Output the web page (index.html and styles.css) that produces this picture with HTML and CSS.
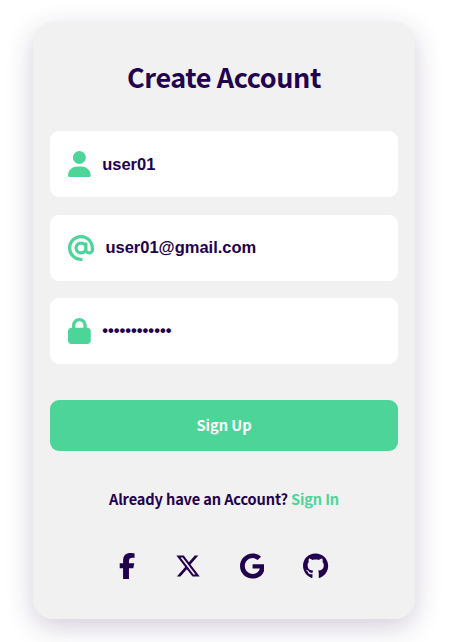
FILE: index.html
```html
<!DOCTYPE html>
<html lang="en">
<head>
    <meta charset="UTF-8">
    <meta name="viewport" content="width=device-width, initial-scale=1.0">
    <title>Create Account</title>
    <link rel="stylesheet" href="styles.css">
</head>
<body>
    <form class="card">
        <h1 class="title">Create Account</h1>

        <div class="inputs">
            <label class="field">
                <svg class="icon" viewBox="0 0 448 512"><path d="M224 256A128 128 0 1 0 224 0a128 128 0 1 0 0 256zm-45.700 48C79.800 304 0 383.800 0 482.300C0 498.700 13.300 512 29.700 512H418.300c16.400 0 29.700-13.300 29.700-29.700C448 383.800 368.200 304 269.700 304H178.300z"/></svg>
                <input type="text" value="user01" aria-label="Username">
            </label>
            <label class="field">
                <svg class="icon" viewBox="0 0 512 512"><path d="M256 64C150 64 64 150 64 256s86 192 192 192c17.700 0 32 14.300 32 32s-14.300 32-32 32C114.600 512 0 397.400 0 256S114.600 0 256 0S512 114.600 512 256v32c0 53-43 96-96 96c-29.300 0-55.600-13.200-73.200-33.900C320 371.100 289.500 384 256 384c-70.700 0-128-57.300-128-128s57.300-128 128-128c27.900 0 53.700 8.900 74.700 24.100c5.700-5 13.100-8.100 21.300-8.100c17.700 0 32 14.300 32 32v112c0 17.700 14.300 32 32 32s32-14.300 32-32V256c0-106-86-192-192-192zm64 192a64 64 0 1 0 -128 0 64 64 0 1 0 128 0z"/></svg>
                <input type="text" value="user01@gmail.com" aria-label="Email">
            </label>
            <label class="field">
                <svg class="icon" viewBox="0 0 448 512"><path d="M144 144v48H304V144c0-44.200-35.800-80-80-80s-80 35.800-80 80zM80 192V144C80 64.500 144.500 0 224 0s144 64.500 144 144v48h16c35.300 0 64 28.700 64 64V448c0 35.300-28.700 64-64 64H64c-35.300 0-64-28.700-64-64V256c0-35.300 28.700-64 64-64H80z"/></svg>
                <input type="password" value="password1234" aria-label="Password">
            </label>
        </div>

        <button type="button" class="btn">Sign Up</button>

        <p class="signin">Already have an Account? <a href="#">Sign In</a></p>

        <div class="social">
            <a href="#" aria-label="Facebook"><svg class="icon" viewBox="0 0 320 512"><path d="M80 299.300V512H196V299.300h86.500l18-97.800H196V166.900c0-51.700 20.300-71.500 72.700-71.500c16.300 0 29.400 .4 37 1.200V7.900C291.400 4 256.400 0 236.200 0C129.300 0 80 50.500 80 159.400v42.100H14v97.800H80z"/></svg></a>
            <a href="#" aria-label="X"><svg class="icon" viewBox="0 0 512 512"><path d="M389.200 48h70.600L305.600 224.200 487 464H345L233.700 318.600 106.500 464H35.800L200.700 275.500 26.800 48H172.400L272.900 180.900 389.200 48zM364.400 421.800h39.100L151.100 88h-42L364.400 421.800z"/></svg></a>
            <a href="#" aria-label="Google"><svg class="icon" viewBox="0 0 488 512"><path d="M488 261.800C488 403.300 391.100 504 248 504 110.800 504 0 393.200 0 256S110.800 8 248 8c66.800 0 123 24.500 166.300 64.900l-67.500 64.900C258.500 52.600 94.300 116.600 94.300 256c0 86.500 69.100 156.600 153.700 156.600 98.200 0 135-70.400 140.800-106.900H248v-85.300h236.100c2.300 12.700 3.900 24.900 3.900 41.400z"/></svg></a>
            <a href="#" aria-label="GitHub"><svg class="icon" viewBox="0 0 496 512"><path d="M165.900 397.400c0 2-2.300 3.600-5.200 3.600-3.300.3-5.600-1.300-5.600-3.600 0-2 2.300-3.600 5.200-3.600 3-.3 5.600 1.300 5.600 3.600zm-31.100-4.500c-.7 2 1.300 4.300 4.300 4.900 2.600 1 5.600 0 6.200-2s-1.300-4.300-4.300-5.200c-2.600-.7-5.500.3-6.200 2.300zm44.200-1.700c-2.900.7-4.900 2.600-4.600 4.900.3 2 2.900 3.300 5.900 2.600 2.900-.7 4.900-2.600 4.600-4.600-.3-1.900-3-3.200-5.900-2.900zM244.800 8C106.100 8 0 113.300 0 252c0 110.900 69.800 205.800 169.500 239.200 12.800 2.300 17.300-5.600 17.300-12.100 0-6.200-.3-40.400-.3-61.400 0 0-70 15-84.700-29.800 0 0-11.400-29.100-27.800-36.600 0 0-22.900-15.700 1.600-15.400 0 0 24.900 2 38.600 25.800 21.900 38.600 58.600 27.500 72.900 20.900 2.300-16 8.800-27.100 16-33.700-55.900-6.200-112.300-14.300-112.300-110.500 0-27.500 7.600-41.300 23.600-58.900-2.600-6.500-11.100-33.300 2.600-67.900 20.900-6.500 69 27 69 27 20-5.600 41.500-8.500 62.800-8.500s42.800 2.900 62.800 8.500c0 0 48.100-33.600 69-27 13.700 34.700 5.200 61.400 2.600 67.900 16 17.700 25.800 31.500 25.800 58.900 0 96.500-58.900 104.200-114.800 110.500 9.200 7.900 17 22.900 17 46.400 0 33.700-.3 75.400-.3 83.600 0 6.500 4.600 14.400 17.300 12.100C428.200 457.800 496 362.900 496 252 496 113.300 383.500 8 244.800 8z"/></svg></a>
        </div>
    </form>
</body>
</html>
```
FILE: styles.css
```css
:root {
    --green: #4dd599;
    --purple: #22004d;
    --card: #f1f1f1;
}

* {
    margin: 0;
    padding: 0;
    box-sizing: border-box;
}

body {
    background-color: #fff;
    color: var(--purple);
    font-family: "Noto Sans CJK SC", sans-serif;
    padding: 22px 35px 0 33px;
    height: 642px;
    overflow: hidden;
}

.card {
    display: flex;
    flex-direction: column;
    height: 597px;
    padding: 34px 17px 0;
    background-color: var(--card);
    border-radius: 20px;
    box-shadow: 0 8px 28px rgba(34, 0, 77, 0.2);
}

.title {
    font-size: 27px;
    font-weight: 700;
    letter-spacing: -0.4px;
    line-height: 42px;
    text-align: center;
    margin-bottom: 33px;
}

.inputs {
    display: flex;
    flex-direction: column;
    gap: 17.5px;
}

.field {
    display: flex;
    align-items: center;
    gap: 11.4px;
    height: 66px;
    padding: 0 18px;
    background-color: #fff;
    border-radius: 9px;
}

.icon {
    display: block;
    height: 26px;
    fill: currentColor;
}

.field .icon {
    color: var(--green);
}

.field input {
    flex: 1;
    min-width: 0;
    border: none;
    outline: none;
    background: transparent;
    color: var(--purple);
    font: 700 16.5px "Liberation Sans", Arial, sans-serif;
}

.field input[type="password"] {
    padding-bottom: 2px;
}

.btn {
    height: 51px;
    margin-top: 36px;
    padding-bottom: 2px;
    border: none;
    border-radius: 9px;
    background-color: var(--green);
    color: #fff;
    font: 700 14.6px "Noto Sans CJK SC", sans-serif;
    cursor: pointer;
}

.signin {
    margin-top: 36px;
    font-size: 14.6px;
    font-weight: 700;
    letter-spacing: -0.14px;
    line-height: 24px;
    text-align: center;
}

.signin a {
    color: var(--green);
    text-decoration: none;
}

.social {
    display: flex;
    justify-content: center;
    gap: 39px;
    margin-top: 42px;
}

.social a {
    color: inherit;
}
```
